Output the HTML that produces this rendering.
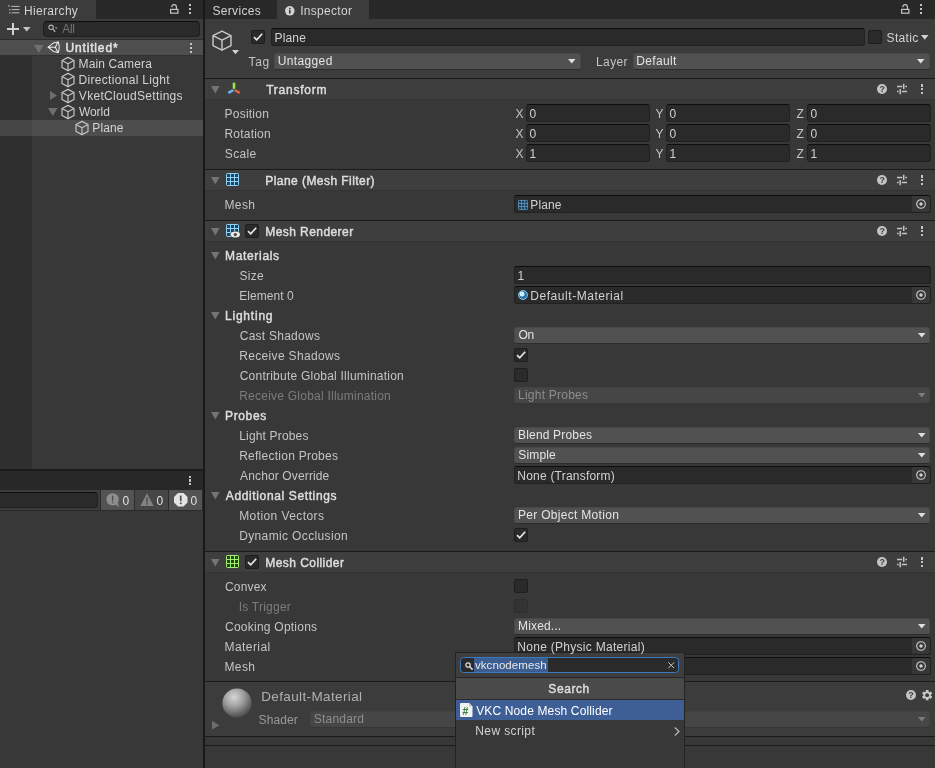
<!DOCTYPE html>
<html><head><meta charset="utf-8"><title>Unity Inspector</title>
<style>
html,body{margin:0;padding:0;background:#383838;}
#r{position:relative;width:935px;height:768px;overflow:hidden;font-family:"Liberation Sans", sans-serif;font-size:12px;}
#r div,#r svg,#r span{position:absolute;display:block;}
#r svg{overflow:visible;}
#tx{left:0;top:0;width:935px;height:768px;will-change:transform;}
.t{height:16px;line-height:16px;white-space:nowrap;letter-spacing:0.26px;}
</style></head><body><div id="r">
<div style="left:0px;top:0px;width:935px;height:768px;background:#383838;"></div>
<div style="left:0px;top:0px;width:203px;height:19px;background:#282828;"></div>
<div style="left:0px;top:0px;width:96px;height:19px;background:#3c3c3c;"></div>
<div style="left:0px;top:19px;width:203px;height:21px;background:#3c3c3c;"></div>
<div style="left:0px;top:39px;width:203px;height:1px;background:#2c2c2c;"></div>
<svg style="left:8px;top:5px;" width="12" height="9" viewBox="0 0 12 9"><g fill="#b8b8b8"><rect x="0.3" y="0.2" width="1.4" height="1.4"/><rect x="3.2" y="0.9" width="8.3" height="1"/><rect x="1.2" y="4" width="1.3" height="1.3"/><rect x="3.6" y="4.1" width="7.9" height="1"/><rect x="1.2" y="7.2" width="1.3" height="1.3"/><rect x="3.6" y="7.3" width="7.9" height="1"/></g></svg>
<svg style="left:170px;top:4px;" width="9" height="10" viewBox="0 0 9 10"><rect x="0.6" y="5.4" width="7.3" height="3.8" fill="none" stroke="#c4c4c4" stroke-width="1.2"/><path d="M1.8 3.2 V2.9 A2.3 2.3 0 0 1 6.4 2.9 V5" fill="none" stroke="#c4c4c4" stroke-width="1.2"/></svg>
<div style="left:189px;top:4.0px;width:2px;height:2.4px;background:#c4c4c4;"></div>
<div style="left:189px;top:7.8px;width:2px;height:2.4px;background:#c4c4c4;"></div>
<div style="left:189px;top:11.6px;width:2px;height:2.4px;background:#c4c4c4;"></div>
<svg style="left:7px;top:23px;" width="12" height="12" viewBox="0 0 12 12"><path d="M6 0 V12 M0 6 H12" stroke="#d2d2d2" stroke-width="2" fill="none"/></svg>
<svg style="left:23px;top:27px;" width="7.5" height="4.5" viewBox="0 0 7.5 4.5"><path d="M0 0 H7.5 L3.75 4.5 Z" fill="#c4c4c4"/></svg>
<div style="left:43px;top:21px;width:157px;height:16px;background:#2a2a2a;border:1px solid #1f1f1f;border-top-color:#0d0d0d;border-radius:4px;box-sizing:border-box;"></div>
<svg style="left:48px;top:24px;" width="10" height="10" viewBox="0 0 10 10"><circle cx="3.1" cy="3.3" r="2.2" fill="none" stroke="#b0b0b0" stroke-width="1.1"/><path d="M4.8 5.1 L7.2 7.8" stroke="#b0b0b0" stroke-width="1.3"/><path d="M6.8 3.4 H9.6 L8.2 5 Z" fill="#b0b0b0"/></svg>
<div style="left:0px;top:40px;width:203px;height:15px;background:#4e4e4e;"></div>
<div style="left:0px;top:55px;width:203px;height:1px;background:#303030;"></div>
<svg style="left:33.5px;top:45px;" width="9.5" height="8" viewBox="0 0 9.5 8"><path d="M0 0 H9.5 L4.75 8 Z" fill="#707070"/></svg>
<svg style="left:47.0px;top:41.2px;" width="13" height="12.5" viewBox="0 0 13 12.5"><g fill="none" stroke="#ececec" stroke-width="1.05" stroke-linejoin="round" stroke-linecap="round"><path d="M1.2 6.2 L6.3 2.1 L11.1 0.9 Q13.3 6.2 11.1 11.6 L6.3 10.4 Z"/><path d="M1.2 6.2 H8.4 M8.4 6.2 L10.6 1.6 M8.4 6.2 L10.6 10.9"/></g><path d="M9.6 1.2 L11.4 0.5 L11.9 3.2 Z M9.6 11.3 L11.4 12 L11.9 9.3 Z M0.6 6.2 L2.8 4.9 V7.5 Z" fill="#ececec"/></svg>
<div style="left:190px;top:43.0px;width:2px;height:2.4px;background:#c4c4c4;"></div>
<div style="left:190px;top:46.8px;width:2px;height:2.4px;background:#c4c4c4;"></div>
<div style="left:190px;top:50.6px;width:2px;height:2.4px;background:#c4c4c4;"></div>
<div style="left:0px;top:56px;width:32px;height:412.5px;background:#2f2f2f;"></div>
<div style="left:0px;top:120px;width:203px;height:16px;background:#4d4d4d;"></div>
<div style="left:0px;top:120px;width:32px;height:16px;background:#464646;"></div>
<svg style="left:59.5px;top:56.0px;" width="16" height="16" viewBox="0 0 16 16" preserveAspectRatio="none"><g fill="none" stroke="#c4c4c4" stroke-width="1.2" stroke-linejoin="round"><path d="M8 1.4 L14 4.5 V11.5 L8 14.6 L2 11.5 V4.5 Z"/><path d="M2 4.5 L8 7.7 L14 4.5 M8 7.7 V14.6"/></g></svg>
<svg style="left:59.5px;top:72.0px;" width="16" height="16" viewBox="0 0 16 16" preserveAspectRatio="none"><g fill="none" stroke="#c4c4c4" stroke-width="1.2" stroke-linejoin="round"><path d="M8 1.4 L14 4.5 V11.5 L8 14.6 L2 11.5 V4.5 Z"/><path d="M2 4.5 L8 7.7 L14 4.5 M8 7.7 V14.6"/></g></svg>
<svg style="left:59.5px;top:88.0px;" width="16" height="16" viewBox="0 0 16 16" preserveAspectRatio="none"><g fill="none" stroke="#c4c4c4" stroke-width="1.2" stroke-linejoin="round"><path d="M8 1.4 L14 4.5 V11.5 L8 14.6 L2 11.5 V4.5 Z"/><path d="M2 4.5 L8 7.7 L14 4.5 M8 7.7 V14.6"/></g></svg>
<svg style="left:50px;top:91.0px;" width="7" height="9" viewBox="0 0 7 9"><path d="M0 0 V9 L7 4.5 Z" fill="#6e6e6e"/></svg>
<svg style="left:59.5px;top:104.0px;" width="16" height="16" viewBox="0 0 16 16" preserveAspectRatio="none"><g fill="none" stroke="#c4c4c4" stroke-width="1.2" stroke-linejoin="round"><path d="M8 1.4 L14 4.5 V11.5 L8 14.6 L2 11.5 V4.5 Z"/><path d="M2 4.5 L8 7.7 L14 4.5 M8 7.7 V14.6"/></g></svg>
<svg style="left:48px;top:108.0px;" width="9.5" height="8" viewBox="0 0 9.5 8"><path d="M0 0 H9.5 L4.75 8 Z" fill="#6e6e6e"/></svg>
<svg style="left:73.5px;top:120.0px;" width="16" height="16" viewBox="0 0 16 16" preserveAspectRatio="none"><g fill="none" stroke="#c4c4c4" stroke-width="1.2" stroke-linejoin="round"><path d="M8 1.4 L14 4.5 V11.5 L8 14.6 L2 11.5 V4.5 Z"/><path d="M2 4.5 L8 7.7 L14 4.5 M8 7.7 V14.6"/></g></svg>
<div style="left:0px;top:468.5px;width:203px;height:2.5px;background:#1b1b1b;"></div>
<div style="left:0px;top:471px;width:203px;height:19px;background:#282828;"></div>
<div style="left:189px;top:475.5px;width:2px;height:2.4px;background:#c4c4c4;"></div>
<div style="left:189px;top:479.3px;width:2px;height:2.4px;background:#c4c4c4;"></div>
<div style="left:189px;top:483.1px;width:2px;height:2.4px;background:#c4c4c4;"></div>
<div style="left:0px;top:490px;width:203px;height:20px;background:#3c3c3c;"></div>
<div style="left:0px;top:510px;width:203px;height:1px;background:#2a2a2a;"></div>
<div style="left:-4px;top:492px;width:101.5px;height:16px;background:#2a2a2a;border:1px solid #1f1f1f;border-top-color:#0d0d0d;border-radius:4px;box-sizing:border-box;"></div>
<div style="left:101px;top:490px;width:33px;height:20px;background:#535353;"></div>
<div style="left:100px;top:490px;width:1px;height:20px;background:#2a2a2a;"></div>
<div style="left:135px;top:490px;width:33px;height:20px;background:#464646;"></div>
<div style="left:134px;top:490px;width:1px;height:20px;background:#2a2a2a;"></div>
<div style="left:169px;top:490px;width:33px;height:20px;background:#535353;"></div>
<div style="left:168px;top:490px;width:1px;height:20px;background:#2a2a2a;"></div>
<div style="left:202px;top:490px;width:1px;height:20px;background:#2a2a2a;"></div>
<svg style="left:106px;top:492.5px;" width="14" height="15" viewBox="0 0 14 15"><circle cx="6.6" cy="6.4" r="6.2" fill="#8e8e8e"/><path d="M8.5 10.5 L12.8 14.4 L11.5 8.5 Z" fill="#8e8e8e"/><rect x="5.9" y="2.6" width="1.4" height="5.2" fill="#505050"/><rect x="5.9" y="8.8" width="1.4" height="1.5" fill="#505050"/></svg>
<svg style="left:139.5px;top:492.5px;" width="14" height="13" viewBox="0 0 14 13"><path d="M7 0.3 L13.6 13 H0.4 Z" fill="#828282"/><rect x="6.3" y="4.4" width="1.4" height="5" fill="#464646"/><rect x="6.3" y="10.2" width="1.4" height="1.4" fill="#464646"/></svg>
<svg style="left:173.5px;top:492.5px;" width="13.5" height="13.5" viewBox="0 0 13.5 13.5"><path d="M4 0 H9.5 L13.5 4 V9.5 L9.5 13.5 H4 L0 9.5 V4 Z" fill="#e4e4e4"/><rect x="5.9" y="2.6" width="1.7" height="5.6" fill="#505050"/><rect x="5.9" y="9.4" width="1.7" height="1.7" fill="#505050"/></svg>
<div style="left:203px;top:0px;width:2px;height:768px;background:#191919;"></div>
<div style="left:205px;top:0px;width:730px;height:19px;background:#282828;"></div>
<div style="left:277px;top:0px;width:91.5px;height:19px;background:#3c3c3c;"></div>
<svg style="left:285px;top:5.5px;" width="9.6" height="9.6" viewBox="0 0 9.6 9.6"><circle cx="4.8" cy="4.8" r="4.8" fill="#d2d2d2"/><rect x="4" y="4" width="1.6" height="3.6" fill="#3c3c3c"/><rect x="4" y="1.8" width="1.6" height="1.5" fill="#3c3c3c"/></svg>
<svg style="left:900.5px;top:4px;" width="9" height="10" viewBox="0 0 9 10"><rect x="0.6" y="5.4" width="7.3" height="3.8" fill="none" stroke="#c4c4c4" stroke-width="1.2"/><path d="M1.8 3.2 V2.9 A2.3 2.3 0 0 1 6.4 2.9 V5" fill="none" stroke="#c4c4c4" stroke-width="1.2"/></svg>
<div style="left:920px;top:4.0px;width:2px;height:2.4px;background:#c4c4c4;"></div>
<div style="left:920px;top:7.8px;width:2px;height:2.4px;background:#c4c4c4;"></div>
<div style="left:920px;top:11.6px;width:2px;height:2.4px;background:#c4c4c4;"></div>
<div style="left:205px;top:19px;width:730px;height:59px;background:#3c3c3c;"></div>
<svg style="left:210.25px;top:28.7px;" width="24" height="23.2" viewBox="0 0 16 16" preserveAspectRatio="none"><g fill="none" stroke="#c8c8c8" stroke-width="0.95" stroke-linejoin="round"><path d="M8 1.4 L14 4.5 V11.5 L8 14.6 L2 11.5 V4.5 Z"/><path d="M2 4.5 L8 7.7 L14 4.5 M8 7.7 V14.6"/></g></svg>
<svg style="left:231.5px;top:50px;" width="7" height="4.2" viewBox="0 0 7 4.2"><path d="M0 0 H7 L3.5 4.2 Z" fill="#d2d2d2"/></svg>
<div style="left:251px;top:30px;width:14px;height:14px;background:#2a2a2a;border:1px solid #1e1e1e;border-radius:2px;box-sizing:border-box;"></div>
<svg style="left:251px;top:30px;" width="14" height="14" viewBox="0 0 14 14"><path d="M3 7.2 L5.7 9.8 L11.2 3.8" fill="none" stroke="#e6e6e6" stroke-width="1.7"/></svg>
<div style="left:271px;top:28px;width:594px;height:18px;background:#2a2a2a;border:1px solid #212121;border-top-color:#0d0d0d;border-radius:3px;box-sizing:border-box;"></div>
<div style="left:868px;top:30px;width:14px;height:14px;background:#2a2a2a;border:1px solid #1e1e1e;border-radius:2px;box-sizing:border-box;"></div>
<svg style="left:921px;top:35px;" width="7.5" height="4.7" viewBox="0 0 7.5 4.7"><path d="M0 0 H7.5 L3.75 4.7 Z" fill="#d2d2d2"/></svg>
<div style="left:273.9px;top:53px;width:307.1px;height:17px;background:#515151;border:1px solid #484848;border-bottom-color:#2c2c2c;border-radius:3px;box-sizing:border-box;"></div>
<svg style="left:568.0px;top:59px;" width="7.5" height="4.5" viewBox="0 0 7.5 4.5"><path d="M0 0 H7.5 L3.75 4.5 Z" fill="#e0e0e0"/></svg>
<div style="left:632.6px;top:53px;width:297.6px;height:17px;background:#515151;border:1px solid #484848;border-bottom-color:#2c2c2c;border-radius:3px;box-sizing:border-box;"></div>
<svg style="left:917.2px;top:59px;" width="7.5" height="4.5" viewBox="0 0 7.5 4.5"><path d="M0 0 H7.5 L3.75 4.5 Z" fill="#e0e0e0"/></svg>
<div style="left:205px;top:78px;width:730px;height:1px;background:#1a1a1a;"></div>
<div style="left:205px;top:79px;width:730px;height:20px;background:#3e3e3e;"></div>
<div style="left:205px;top:99px;width:730px;height:1px;background:#343434;"></div>
<svg style="left:211.2px;top:86px;" width="8.6" height="7.6" viewBox="0 0 8.6 7.6"><path d="M0 0 H8.6 L4.3 7.6 Z" fill="#747474"/></svg>
<div style="left:877px;top:84px;width:10px;height:10px;background:#c4c4c4;border-radius:50%;"></div>
<svg style="left:896px;top:84px;" width="11" height="10" viewBox="0 0 11 10"><g fill="none" stroke="#c4c4c4" stroke-width="1.5"><path d="M1 2.4 H6.2 M9.3 2.4 H11 M1 7.6 H2.6 M5.8 7.6 H11 M7.7 -0.3 V5.1 M4.2 4.9 V10.3"/></g></svg>
<div style="left:921px;top:84.2px;width:2px;height:2.4px;background:#c4c4c4;"></div>
<div style="left:921px;top:88.0px;width:2px;height:2.4px;background:#c4c4c4;"></div>
<div style="left:921px;top:91.8px;width:2px;height:2.4px;background:#c4c4c4;"></div>
<svg style="left:227px;top:82px;" width="14" height="13" viewBox="0 0 14 13"><g stroke-linecap="round" stroke-width="2.6" fill="none"><path d="M7 1.8 V5.8" stroke="#a0e44c"/><path d="M5.4 8.6 L2.2 10.4" stroke="#62b8f0"/><path d="M8.6 8.6 L11.8 10.4" stroke="#e2643e"/></g></svg>
<div style="left:526px;top:104px;width:124px;height:18px;background:#2a2a2a;border:1px solid #212121;border-top-color:#0d0d0d;border-radius:3px;box-sizing:border-box;"></div>
<div style="left:666px;top:104px;width:123.5px;height:18px;background:#2a2a2a;border:1px solid #212121;border-top-color:#0d0d0d;border-radius:3px;box-sizing:border-box;"></div>
<div style="left:807px;top:104px;width:123.5px;height:18px;background:#2a2a2a;border:1px solid #212121;border-top-color:#0d0d0d;border-radius:3px;box-sizing:border-box;"></div>
<div style="left:526px;top:124px;width:124px;height:18px;background:#2a2a2a;border:1px solid #212121;border-top-color:#0d0d0d;border-radius:3px;box-sizing:border-box;"></div>
<div style="left:666px;top:124px;width:123.5px;height:18px;background:#2a2a2a;border:1px solid #212121;border-top-color:#0d0d0d;border-radius:3px;box-sizing:border-box;"></div>
<div style="left:807px;top:124px;width:123.5px;height:18px;background:#2a2a2a;border:1px solid #212121;border-top-color:#0d0d0d;border-radius:3px;box-sizing:border-box;"></div>
<div style="left:526px;top:144px;width:124px;height:18px;background:#2a2a2a;border:1px solid #212121;border-top-color:#0d0d0d;border-radius:3px;box-sizing:border-box;"></div>
<div style="left:666px;top:144px;width:123.5px;height:18px;background:#2a2a2a;border:1px solid #212121;border-top-color:#0d0d0d;border-radius:3px;box-sizing:border-box;"></div>
<div style="left:807px;top:144px;width:123.5px;height:18px;background:#2a2a2a;border:1px solid #212121;border-top-color:#0d0d0d;border-radius:3px;box-sizing:border-box;"></div>
<div style="left:205px;top:169px;width:730px;height:1px;background:#1a1a1a;"></div>
<div style="left:205px;top:170px;width:730px;height:20px;background:#3e3e3e;"></div>
<div style="left:205px;top:190px;width:730px;height:1px;background:#343434;"></div>
<svg style="left:211.2px;top:177px;" width="8.6" height="7.6" viewBox="0 0 8.6 7.6"><path d="M0 0 H8.6 L4.3 7.6 Z" fill="#747474"/></svg>
<div style="left:877px;top:175px;width:10px;height:10px;background:#c4c4c4;border-radius:50%;"></div>
<svg style="left:896px;top:175px;" width="11" height="10" viewBox="0 0 11 10"><g fill="none" stroke="#c4c4c4" stroke-width="1.5"><path d="M1 2.4 H6.2 M9.3 2.4 H11 M1 7.6 H2.6 M5.8 7.6 H11 M7.7 -0.3 V5.1 M4.2 4.9 V10.3"/></g></svg>
<div style="left:921px;top:175.2px;width:2px;height:2.4px;background:#c4c4c4;"></div>
<div style="left:921px;top:179.0px;width:2px;height:2.4px;background:#c4c4c4;"></div>
<div style="left:921px;top:182.79999999999998px;width:2px;height:2.4px;background:#c4c4c4;"></div>
<svg style="left:226px;top:173px;" width="13" height="13" viewBox="0 0 13 13"><g fill="none" stroke="#8fd2f6" stroke-width="1"><rect x="0.5" y="0.5" width="12" height="12" rx="0.8" fill="#1d4560"/><path d="M4.5 0.5 V12.5 M0.5 4.5 H12.5"/><path d="M8.5 0.5 V12.5 M0.5 8.5 H12.5"/></g></svg>
<div style="left:514px;top:195px;width:416.5px;height:18px;background:#2a2a2a;border:1px solid #212121;border-top-color:#0d0d0d;border-radius:3px;box-sizing:border-box;"></div>
<div style="left:911.5px;top:196px;width:18px;height:16px;background:#373737;border-radius:0 2px 2px 0;"></div>
<svg style="left:915.5px;top:199px;" width="10" height="10" viewBox="0 0 10 10"><circle cx="5" cy="5" r="4.3" fill="none" stroke="#d0d0d0" stroke-width="1.1"/><circle cx="5" cy="5" r="1.7" fill="#d0d0d0"/></svg>
<svg style="left:518px;top:199.5px;" width="10" height="10" viewBox="0 0 10 10"><g fill="none" stroke="#5a94bc" stroke-width="0.9"><rect x="0.45" y="0.45" width="9.1" height="9.1" rx="0.8" fill="#1f3d52"/><path d="M3.48 0.45 V9.55 M0.45 3.48 H9.55"/><path d="M6.52 0.45 V9.55 M0.45 6.52 H9.55"/></g></svg>
<div style="left:205px;top:220px;width:730px;height:1px;background:#1a1a1a;"></div>
<div style="left:205px;top:221px;width:730px;height:20px;background:#3e3e3e;"></div>
<div style="left:205px;top:241px;width:730px;height:1px;background:#343434;"></div>
<svg style="left:211.2px;top:228px;" width="8.6" height="7.6" viewBox="0 0 8.6 7.6"><path d="M0 0 H8.6 L4.3 7.6 Z" fill="#747474"/></svg>
<div style="left:245px;top:223.8px;width:14px;height:14px;background:#2a2a2a;border:1px solid #1e1e1e;border-radius:2px;box-sizing:border-box;"></div>
<svg style="left:245px;top:223.8px;" width="14" height="14" viewBox="0 0 14 14"><path d="M3 7.2 L5.7 9.8 L11.2 3.8" fill="none" stroke="#e6e6e6" stroke-width="1.7"/></svg>
<div style="left:877px;top:226px;width:10px;height:10px;background:#c4c4c4;border-radius:50%;"></div>
<svg style="left:896px;top:226px;" width="11" height="10" viewBox="0 0 11 10"><g fill="none" stroke="#c4c4c4" stroke-width="1.5"><path d="M1 2.4 H6.2 M9.3 2.4 H11 M1 7.6 H2.6 M5.8 7.6 H11 M7.7 -0.3 V5.1 M4.2 4.9 V10.3"/></g></svg>
<div style="left:921px;top:226.2px;width:2px;height:2.4px;background:#c4c4c4;"></div>
<div style="left:921px;top:230.0px;width:2px;height:2.4px;background:#c4c4c4;"></div>
<div style="left:921px;top:233.79999999999998px;width:2px;height:2.4px;background:#c4c4c4;"></div>
<svg style="left:226px;top:224px;" width="13" height="13" viewBox="0 0 13 13"><g fill="none" stroke="#8fd2f6" stroke-width="1"><rect x="0.5" y="0.5" width="12" height="12" rx="0.8" fill="#1d4560"/><path d="M4.5 0.5 V12.5 M0.5 4.5 H12.5"/><path d="M8.5 0.5 V12.5 M0.5 8.5 H12.5"/></g></svg>
<svg style="left:229.8px;top:231.2px;" width="10.6" height="7.2" viewBox="0 0 10.6 7.2"><ellipse cx="5.3" cy="3.6" rx="5.4" ry="3.7" fill="#3e3e3e"/><ellipse cx="5.3" cy="3.6" rx="4.7" ry="3" fill="#ececec"/><circle cx="5.3" cy="3.6" r="1.6" fill="#4a4444"/></svg>
<svg style="left:211.2px;top:251.7px;" width="8.6" height="7.6" viewBox="0 0 8.6 7.6"><path d="M0 0 H8.6 L4.3 7.6 Z" fill="#747474"/></svg>
<div style="left:514px;top:266px;width:416.5px;height:18px;background:#2a2a2a;border:1px solid #212121;border-top-color:#0d0d0d;border-radius:3px;box-sizing:border-box;"></div>
<div style="left:514px;top:286px;width:416.5px;height:18px;background:#2a2a2a;border:1px solid #212121;border-top-color:#0d0d0d;border-radius:3px;box-sizing:border-box;"></div>
<div style="left:911.5px;top:287px;width:18px;height:16px;background:#373737;border-radius:0 2px 2px 0;"></div>
<svg style="left:915.5px;top:290px;" width="10" height="10" viewBox="0 0 10 10"><circle cx="5" cy="5" r="4.3" fill="none" stroke="#d0d0d0" stroke-width="1.1"/><circle cx="5" cy="5" r="1.7" fill="#d0d0d0"/></svg>
<svg style="left:517.5px;top:290px;" width="10" height="10" viewBox="0 0 10 10"><circle cx="5" cy="5" r="4.8" fill="#2f6f9e"/><circle cx="5" cy="5" r="4.4" fill="none" stroke="#7cc4e8" stroke-width="1"/><circle cx="4" cy="4" r="2.5" fill="#cdeeff"/></svg>
<svg style="left:211.2px;top:311.7px;" width="8.6" height="7.6" viewBox="0 0 8.6 7.6"><path d="M0 0 H8.6 L4.3 7.6 Z" fill="#747474"/></svg>
<div style="left:514.4px;top:327px;width:416.1px;height:17px;background:#515151;border:1px solid #484848;border-bottom-color:#2c2c2c;border-radius:3px;box-sizing:border-box;"></div>
<svg style="left:917.5px;top:333px;" width="7.5" height="4.5" viewBox="0 0 7.5 4.5"><path d="M0 0 H7.5 L3.75 4.5 Z" fill="#e0e0e0"/></svg>
<div style="left:514px;top:348px;width:14px;height:14px;background:#2a2a2a;border:1px solid #1e1e1e;border-radius:2px;box-sizing:border-box;"></div>
<svg style="left:514px;top:348px;" width="14" height="14" viewBox="0 0 14 14"><path d="M3 7.2 L5.7 9.8 L11.2 3.8" fill="none" stroke="#e6e6e6" stroke-width="1.7"/></svg>
<div style="left:514px;top:368px;width:14px;height:14px;background:#2a2a2a;border:1px solid #1e1e1e;border-radius:2px;box-sizing:border-box;"></div>
<div style="left:514.4px;top:387px;width:416.1px;height:17px;background:#464646;border:1px solid #424242;border-bottom-color:#363636;border-radius:3px;box-sizing:border-box;"></div>
<svg style="left:917.5px;top:393px;" width="7.5" height="4.5" viewBox="0 0 7.5 4.5"><path d="M0 0 H7.5 L3.75 4.5 Z" fill="#7c7c7c"/></svg>
<svg style="left:211.2px;top:411.7px;" width="8.6" height="7.6" viewBox="0 0 8.6 7.6"><path d="M0 0 H8.6 L4.3 7.6 Z" fill="#747474"/></svg>
<div style="left:514.4px;top:427px;width:416.1px;height:17px;background:#515151;border:1px solid #484848;border-bottom-color:#2c2c2c;border-radius:3px;box-sizing:border-box;"></div>
<svg style="left:917.5px;top:433px;" width="7.5" height="4.5" viewBox="0 0 7.5 4.5"><path d="M0 0 H7.5 L3.75 4.5 Z" fill="#e0e0e0"/></svg>
<div style="left:514.4px;top:447px;width:416.1px;height:17px;background:#515151;border:1px solid #484848;border-bottom-color:#2c2c2c;border-radius:3px;box-sizing:border-box;"></div>
<svg style="left:917.5px;top:453px;" width="7.5" height="4.5" viewBox="0 0 7.5 4.5"><path d="M0 0 H7.5 L3.75 4.5 Z" fill="#e0e0e0"/></svg>
<div style="left:514px;top:466px;width:416.5px;height:18px;background:#2a2a2a;border:1px solid #212121;border-top-color:#0d0d0d;border-radius:3px;box-sizing:border-box;"></div>
<div style="left:911.5px;top:467px;width:18px;height:16px;background:#373737;border-radius:0 2px 2px 0;"></div>
<svg style="left:915.5px;top:470px;" width="10" height="10" viewBox="0 0 10 10"><circle cx="5" cy="5" r="4.3" fill="none" stroke="#d0d0d0" stroke-width="1.1"/><circle cx="5" cy="5" r="1.7" fill="#d0d0d0"/></svg>
<svg style="left:211.2px;top:491.7px;" width="8.6" height="7.6" viewBox="0 0 8.6 7.6"><path d="M0 0 H8.6 L4.3 7.6 Z" fill="#747474"/></svg>
<div style="left:514.4px;top:507px;width:416.1px;height:17px;background:#515151;border:1px solid #484848;border-bottom-color:#2c2c2c;border-radius:3px;box-sizing:border-box;"></div>
<svg style="left:917.5px;top:513px;" width="7.5" height="4.5" viewBox="0 0 7.5 4.5"><path d="M0 0 H7.5 L3.75 4.5 Z" fill="#e0e0e0"/></svg>
<div style="left:514px;top:528px;width:14px;height:14px;background:#2a2a2a;border:1px solid #1e1e1e;border-radius:2px;box-sizing:border-box;"></div>
<svg style="left:514px;top:528px;" width="14" height="14" viewBox="0 0 14 14"><path d="M3 7.2 L5.7 9.8 L11.2 3.8" fill="none" stroke="#e6e6e6" stroke-width="1.7"/></svg>
<div style="left:205px;top:551px;width:730px;height:1px;background:#1a1a1a;"></div>
<div style="left:205px;top:552px;width:730px;height:20px;background:#3e3e3e;"></div>
<div style="left:205px;top:572px;width:730px;height:1px;background:#343434;"></div>
<svg style="left:211.2px;top:559px;" width="8.6" height="7.6" viewBox="0 0 8.6 7.6"><path d="M0 0 H8.6 L4.3 7.6 Z" fill="#747474"/></svg>
<div style="left:245px;top:554.8px;width:14px;height:14px;background:#2a2a2a;border:1px solid #1e1e1e;border-radius:2px;box-sizing:border-box;"></div>
<svg style="left:245px;top:554.8px;" width="14" height="14" viewBox="0 0 14 14"><path d="M3 7.2 L5.7 9.8 L11.2 3.8" fill="none" stroke="#e6e6e6" stroke-width="1.7"/></svg>
<div style="left:877px;top:557px;width:10px;height:10px;background:#c4c4c4;border-radius:50%;"></div>
<svg style="left:896px;top:557px;" width="11" height="10" viewBox="0 0 11 10"><g fill="none" stroke="#c4c4c4" stroke-width="1.5"><path d="M1 2.4 H6.2 M9.3 2.4 H11 M1 7.6 H2.6 M5.8 7.6 H11 M7.7 -0.3 V5.1 M4.2 4.9 V10.3"/></g></svg>
<div style="left:921px;top:557.2px;width:2px;height:2.4px;background:#c4c4c4;"></div>
<div style="left:921px;top:561.0px;width:2px;height:2.4px;background:#c4c4c4;"></div>
<div style="left:921px;top:564.8000000000001px;width:2px;height:2.4px;background:#c4c4c4;"></div>
<svg style="left:226px;top:555px;" width="13" height="13" viewBox="0 0 13 13"><g fill="none" stroke="#a2ee70" stroke-width="1"><rect x="0.5" y="0.5" width="12" height="12" rx="0.8" fill="#24451a"/><path d="M4.5 0.5 V12.5 M0.5 4.5 H12.5"/><path d="M8.5 0.5 V12.5 M0.5 8.5 H12.5"/></g></svg>
<div style="left:514px;top:579px;width:14px;height:14px;background:#2a2a2a;border:1px solid #1e1e1e;border-radius:2px;box-sizing:border-box;"></div>
<div style="left:514px;top:599px;width:14px;height:14px;background:#333333;border:1px solid #2e2e2e;border-radius:2px;box-sizing:border-box;"></div>
<div style="left:514.4px;top:618px;width:416.1px;height:17px;background:#515151;border:1px solid #484848;border-bottom-color:#2c2c2c;border-radius:3px;box-sizing:border-box;"></div>
<svg style="left:917.5px;top:624px;" width="7.5" height="4.5" viewBox="0 0 7.5 4.5"><path d="M0 0 H7.5 L3.75 4.5 Z" fill="#e0e0e0"/></svg>
<div style="left:514px;top:637px;width:416.5px;height:18px;background:#2a2a2a;border:1px solid #212121;border-top-color:#0d0d0d;border-radius:3px;box-sizing:border-box;"></div>
<div style="left:911.5px;top:638px;width:18px;height:16px;background:#373737;border-radius:0 2px 2px 0;"></div>
<svg style="left:915.5px;top:641px;" width="10" height="10" viewBox="0 0 10 10"><circle cx="5" cy="5" r="4.3" fill="none" stroke="#d0d0d0" stroke-width="1.1"/><circle cx="5" cy="5" r="1.7" fill="#d0d0d0"/></svg>
<div style="left:514px;top:657px;width:416.5px;height:18px;background:#2a2a2a;border:1px solid #212121;border-top-color:#0d0d0d;border-radius:3px;box-sizing:border-box;"></div>
<div style="left:911.5px;top:658px;width:18px;height:16px;background:#373737;border-radius:0 2px 2px 0;"></div>
<svg style="left:915.5px;top:661px;" width="10" height="10" viewBox="0 0 10 10"><circle cx="5" cy="5" r="4.3" fill="none" stroke="#d0d0d0" stroke-width="1.1"/><circle cx="5" cy="5" r="1.7" fill="#d0d0d0"/></svg>
<div style="left:205px;top:681px;width:730px;height:1px;background:#1a1a1a;"></div>
<div style="left:205px;top:682px;width:730px;height:54px;background:#3c3c3c;"></div>
<svg style="left:222px;top:688px;" width="30" height="30" viewBox="0 0 30 30"><defs><radialGradient id="sg" cx="0.4" cy="0.3" r="0.72"><stop offset="0" stop-color="#d6d6d6"/><stop offset="0.45" stop-color="#a0a0a0"/><stop offset="1" stop-color="#484848"/></radialGradient></defs><circle cx="15" cy="15" r="14.6" fill="url(#sg)"/></svg>
<svg style="left:212px;top:721px;" width="7.5" height="8.5" viewBox="0 0 7.5 8.5"><path d="M0 0 V8.5 L7.5 4.25 Z" fill="#6e6e6e"/></svg>
<div style="left:309.9px;top:711px;width:620.6px;height:17px;background:#464646;border:1px solid #424242;border-bottom-color:#363636;border-radius:3px;box-sizing:border-box;"></div>
<svg style="left:917.5px;top:717px;" width="7.5" height="4.5" viewBox="0 0 7.5 4.5"><path d="M0 0 H7.5 L3.75 4.5 Z" fill="#7c7c7c"/></svg>
<div style="left:905.8px;top:690px;width:10px;height:10px;background:#c4c4c4;border-radius:50%;"></div>
<svg style="left:921.7px;top:689.9px;" width="10.3" height="10.3" viewBox="0 0 10.3 10.3"><g transform="translate(5.15 5.15)" fill="#c8c8c8"><circle r="3.6"/><rect x="-1.35" y="-5.15" width="2.7" height="3" rx="0.5" transform="rotate(0)"/><rect x="-1.35" y="-5.15" width="2.7" height="3" rx="0.5" transform="rotate(60)"/><rect x="-1.35" y="-5.15" width="2.7" height="3" rx="0.5" transform="rotate(120)"/><rect x="-1.35" y="-5.15" width="2.7" height="3" rx="0.5" transform="rotate(180)"/><rect x="-1.35" y="-5.15" width="2.7" height="3" rx="0.5" transform="rotate(240)"/><rect x="-1.35" y="-5.15" width="2.7" height="3" rx="0.5" transform="rotate(300)"/><circle r="1.9" fill="#3c3c3c"/></g></svg>
<div style="left:205px;top:736px;width:730px;height:1px;background:#1a1a1a;"></div>
<div style="left:205px;top:745px;width:730px;height:1px;background:#1a1a1a;"></div>
<div style="left:455px;top:652px;width:229px;height:116px;background:#3e3e3e;border:1px solid #222222;border-right:none;border-bottom:none;box-sizing:border-box;"></div>
<div style="left:456px;top:678px;width:228px;height:90px;background:#383838;"></div>
<div style="left:460px;top:657px;width:219px;height:16px;background:#2a2a2a;border:1px solid #3a79bb;border-radius:3.5px;box-sizing:border-box;"></div>
<svg style="left:464.5px;top:661.5px;" width="8.5" height="8.5" viewBox="0 0 8.5 8.5"><circle cx="3" cy="3" r="2.2" fill="none" stroke="#d8d8d8" stroke-width="1.3"/><path d="M4.8 4.8 L7.6 7.6" stroke="#d8d8d8" stroke-width="1.6"/></svg>
<div style="left:473.7px;top:658px;width:74px;height:14px;background:#3c5d92;"></div>
<svg style="left:667.5px;top:662px;" width="6.5" height="6.5" viewBox="0 0 6.5 6.5"><path d="M0.3 0.3 L6.2 6.2 M6.2 0.3 L0.3 6.2" stroke="#c8c8c8" stroke-width="1"/></svg>
<div style="left:456px;top:677px;width:228px;height:1px;background:#262626;"></div>
<div style="left:456px;top:678px;width:228px;height:21px;background:#4a4a4a;"></div>
<div style="left:456px;top:699px;width:228px;height:1px;background:#2a2a2a;"></div>
<div style="left:456px;top:700px;width:228px;height:20px;background:#3e5f96;"></div>
<div style="left:684px;top:652px;width:1px;height:116px;background:#242424;"></div>
<svg style="left:460px;top:703px;" width="12.5" height="14" viewBox="0 0 12.5 14"><path d="M0 1 A1 1 0 0 1 1 0 H9 L12.5 3.5 V13 A1 1 0 0 1 11.5 14 H1 A1 1 0 0 1 0 13 Z" fill="#f2f2f2"/><path d="M9 0 V3.5 H12.5 Z" fill="#c8c8c8"/></svg>
<svg style="left:674px;top:726.5px;" width="6" height="9" viewBox="0 0 6 9"><path d="M0.8 0.5 L5 4.5 L0.8 8.5" fill="none" stroke="#b4b4b4" stroke-width="1.3"/></svg>
<div id="tx"><span class="t" style="left:24.01px;top:2.5px;color:#d2d2d2;letter-spacing:0.315px;">Hierarchy</span>
<span class="t" style="left:62.25px;top:21px;color:#747474;letter-spacing:-0.300px;">All</span>
<span class="t" style="left:65.50px;top:39.5px;color:#e4e4e4;-webkit-text-stroke:0.45px #e4e4e4;letter-spacing:0.838px;">Untitled*</span>
<span class="t" style="left:78.51px;top:56.0px;color:#d2d2d2;letter-spacing:0.133px;">Main Camera</span>
<span class="t" style="left:78.51px;top:72.0px;color:#d2d2d2;letter-spacing:0.320px;">Directional Light</span>
<span class="t" style="left:78.84px;top:88.0px;color:#d2d2d2;letter-spacing:0.316px;">VketCloudSettings</span>
<span class="t" style="left:78.88px;top:104.0px;color:#d2d2d2;letter-spacing:-0.024px;">World</span>
<span class="t" style="left:92.31px;top:120.0px;color:#d2d2d2;letter-spacing:0.121px;">Plane</span>
<span class="t" style="left:122.50px;top:492.5px;color:#e0e0e0;">0</span>
<span class="t" style="left:156.50px;top:492.5px;color:#e0e0e0;">0</span>
<span class="t" style="left:190.50px;top:492.5px;color:#e0e0e0;">0</span>
<span class="t" style="left:212.45px;top:2.5px;color:#d2d2d2;letter-spacing:0.331px;">Services</span>
<span class="t" style="left:300.19px;top:2.5px;color:#d2d2d2;letter-spacing:0.296px;">Inspector</span>
<span class="t" style="left:274.51px;top:29.75px;color:#d2d2d2;letter-spacing:0.171px;">Plane</span>
<span class="t" style="left:886.55px;top:29.5px;color:#d2d2d2;letter-spacing:0.325px;">Static</span>
<span class="t" style="left:248.53px;top:53.5px;color:#c4c4c4;letter-spacing:0.678px;">Tag</span>
<span class="t" style="left:277.80px;top:53.0px;color:#e4e4e4;letter-spacing:0.354px;">Untagged</span>
<span class="t" style="left:596.01px;top:53.5px;color:#c4c4c4;letter-spacing:0.394px;">Layer</span>
<span class="t" style="left:636.21px;top:53.0px;color:#e4e4e4;letter-spacing:0.370px;">Default</span>
<span class="t" style="left:266.13px;top:81.5px;color:#dedede;-webkit-text-stroke:0.45px #dedede;letter-spacing:0.759px;">Transform</span>
<span class="t" style="left:879.40px;top:81.4px;color:#3e3e3e;font-size:9px;font-weight:bold;letter-spacing:0.000px;width:10px;">?</span>
<span class="t" style="left:224.51px;top:105.5px;color:#c4c4c4;letter-spacing:0.233px;">Position</span>
<span class="t" style="left:515.50px;top:105.5px;color:#c4c4c4;">X</span>
<span class="t" style="left:529.50px;top:105.75px;color:#d2d2d2;">0</span>
<span class="t" style="left:655.50px;top:105.5px;color:#c4c4c4;">Y</span>
<span class="t" style="left:669.50px;top:105.75px;color:#d2d2d2;">0</span>
<span class="t" style="left:796.50px;top:105.5px;color:#c4c4c4;">Z</span>
<span class="t" style="left:810.50px;top:105.75px;color:#d2d2d2;">0</span>
<span class="t" style="left:224.51px;top:125.5px;color:#c4c4c4;letter-spacing:0.204px;">Rotation</span>
<span class="t" style="left:515.50px;top:125.5px;color:#c4c4c4;">X</span>
<span class="t" style="left:529.50px;top:125.75px;color:#d2d2d2;">0</span>
<span class="t" style="left:655.50px;top:125.5px;color:#c4c4c4;">Y</span>
<span class="t" style="left:669.50px;top:125.75px;color:#d2d2d2;">0</span>
<span class="t" style="left:796.50px;top:125.5px;color:#c4c4c4;">Z</span>
<span class="t" style="left:810.50px;top:125.75px;color:#d2d2d2;">0</span>
<span class="t" style="left:224.85px;top:145.5px;color:#c4c4c4;letter-spacing:0.311px;">Scale</span>
<span class="t" style="left:515.50px;top:145.5px;color:#c4c4c4;">X</span>
<span class="t" style="left:529.50px;top:145.75px;color:#d2d2d2;">1</span>
<span class="t" style="left:655.50px;top:145.5px;color:#c4c4c4;">Y</span>
<span class="t" style="left:669.50px;top:145.75px;color:#d2d2d2;">1</span>
<span class="t" style="left:796.50px;top:145.5px;color:#c4c4c4;">Z</span>
<span class="t" style="left:810.50px;top:145.75px;color:#d2d2d2;">1</span>
<span class="t" style="left:265.31px;top:172.5px;color:#dedede;-webkit-text-stroke:0.45px #dedede;letter-spacing:0.439px;">Plane (Mesh Filter)</span>
<span class="t" style="left:879.40px;top:172.4px;color:#3e3e3e;font-size:9px;font-weight:bold;letter-spacing:0.000px;width:10px;">?</span>
<span class="t" style="left:224.51px;top:196.5px;color:#c4c4c4;letter-spacing:0.355px;">Mesh</span>
<span class="t" style="left:530.31px;top:196.75px;color:#d2d2d2;letter-spacing:0.121px;">Plane</span>
<span class="t" style="left:265.31px;top:223.5px;color:#dedede;-webkit-text-stroke:0.45px #dedede;letter-spacing:0.428px;">Mesh Renderer</span>
<span class="t" style="left:879.40px;top:223.4px;color:#3e3e3e;font-size:9px;font-weight:bold;letter-spacing:0.000px;width:10px;">?</span>
<span class="t" style="left:225.01px;top:247.5px;color:#dedede;-webkit-text-stroke:0.45px #dedede;letter-spacing:0.673px;">Materials</span>
<span class="t" style="left:239.55px;top:267.5px;color:#c4c4c4;letter-spacing:0.221px;">Size</span>
<span class="t" style="left:517.50px;top:267.75px;color:#d2d2d2;">1</span>
<span class="t" style="left:239.21px;top:287.5px;color:#c4c4c4;letter-spacing:0.066px;">Element 0</span>
<span class="t" style="left:530.31px;top:287.75px;color:#d2d2d2;letter-spacing:0.546px;">Default-Material</span>
<span class="t" style="left:225.01px;top:307.5px;color:#dedede;-webkit-text-stroke:0.45px #dedede;letter-spacing:0.782px;">Lighting</span>
<span class="t" style="left:239.72px;top:327.5px;color:#c4c4c4;letter-spacing:0.255px;">Cast Shadows</span>
<span class="t" style="left:518.56px;top:327.0px;color:#e4e4e4;letter-spacing:-0.300px;">On</span>
<span class="t" style="left:239.21px;top:347.5px;color:#c4c4c4;letter-spacing:0.340px;">Receive Shadows</span>
<span class="t" style="left:239.72px;top:367.5px;color:#c4c4c4;letter-spacing:0.229px;">Contribute Global Illumination</span>
<span class="t" style="left:239.21px;top:387.5px;color:#7c7c7c;letter-spacing:0.237px;">Receive Global Illumination</span>
<span class="t" style="left:518.01px;top:387.0px;color:#8e8e8e;letter-spacing:0.235px;">Light Probes</span>
<span class="t" style="left:225.01px;top:407.5px;color:#dedede;-webkit-text-stroke:0.45px #dedede;letter-spacing:0.633px;">Probes</span>
<span class="t" style="left:239.21px;top:427.5px;color:#c4c4c4;letter-spacing:0.171px;">Light Probes</span>
<span class="t" style="left:518.01px;top:427.0px;color:#e4e4e4;letter-spacing:0.178px;">Blend Probes</span>
<span class="t" style="left:239.21px;top:447.5px;color:#c4c4c4;letter-spacing:0.249px;">Reflection Probes</span>
<span class="t" style="left:518.35px;top:447.0px;color:#e4e4e4;letter-spacing:0.127px;">Simple</span>
<span class="t" style="left:240.05px;top:467.5px;color:#c4c4c4;letter-spacing:0.134px;">Anchor Override</span>
<span class="t" style="left:517.31px;top:467.75px;color:#d2d2d2;letter-spacing:0.213px;">None (Transform)</span>
<span class="t" style="left:225.85px;top:487.5px;color:#dedede;-webkit-text-stroke:0.45px #dedede;letter-spacing:0.625px;">Additional Settings</span>
<span class="t" style="left:239.21px;top:507.5px;color:#c4c4c4;letter-spacing:0.409px;">Motion Vectors</span>
<span class="t" style="left:518.01px;top:507.0px;color:#e4e4e4;letter-spacing:0.299px;">Per Object Motion</span>
<span class="t" style="left:239.21px;top:527.5px;color:#c4c4c4;letter-spacing:0.358px;">Dynamic Occlusion</span>
<span class="t" style="left:265.31px;top:554.5px;color:#dedede;-webkit-text-stroke:0.45px #dedede;letter-spacing:0.438px;">Mesh Collider</span>
<span class="t" style="left:879.40px;top:554.4px;color:#3e3e3e;font-size:9px;font-weight:bold;letter-spacing:0.000px;width:10px;">?</span>
<span class="t" style="left:225.02px;top:578.5px;color:#c4c4c4;letter-spacing:0.165px;">Convex</span>
<span class="t" style="left:238.69px;top:598.5px;color:#7c7c7c;letter-spacing:0.232px;">Is Trigger</span>
<span class="t" style="left:225.02px;top:618.5px;color:#c4c4c4;letter-spacing:0.241px;">Cooking Options</span>
<span class="t" style="left:518.01px;top:618.0px;color:#e4e4e4;letter-spacing:0.155px;">Mixed...</span>
<span class="t" style="left:224.51px;top:638.5px;color:#c4c4c4;letter-spacing:0.428px;">Material</span>
<span class="t" style="left:517.31px;top:638.75px;color:#d2d2d2;letter-spacing:0.288px;">None (Physic Material)</span>
<span class="t" style="left:224.51px;top:658.5px;color:#c4c4c4;letter-spacing:0.355px;">Mesh</span>
<span class="t" style="left:517.70px;top:658.75px;color:#d2d2d2;"></span>
<span class="t" style="left:261.14px;top:688.5px;color:#b0b0b0;font-size:13.5px;letter-spacing:0.377px;">Default-Material</span>
<span class="t" style="left:258.55px;top:711.5px;color:#9a9a9a;letter-spacing:0.076px;">Shader</span>
<span class="t" style="left:313.85px;top:711.0px;color:#8e8e8e;letter-spacing:0.196px;">Standard</span>
<span class="t" style="left:908.20px;top:687.4px;color:#3c3c3c;font-size:9px;font-weight:bold;letter-spacing:0.000px;width:10px;">?</span>
<span class="t" style="left:474.91px;top:657px;color:#e8e8e8;font-size:11.5px;letter-spacing:0.084px;">vkcnodemesh</span>
<span class="t" style="left:548.35px;top:680.5px;color:#dedede;-webkit-text-stroke:0.45px #dedede;letter-spacing:0.585px;">Search</span>
<span class="t" style="left:462.60px;top:702.8px;color:#2f7a36;font-size:10.5px;font-weight:bold;letter-spacing:0.000px;">#</span>
<span class="t" style="left:476.14px;top:702.5px;color:#ffffff;letter-spacing:0.144px;">VKC Node Mesh Collider</span>
<span class="t" style="left:475.31px;top:722.5px;color:#d2d2d2;letter-spacing:0.380px;">New script</span></div>
</div></body></html>
